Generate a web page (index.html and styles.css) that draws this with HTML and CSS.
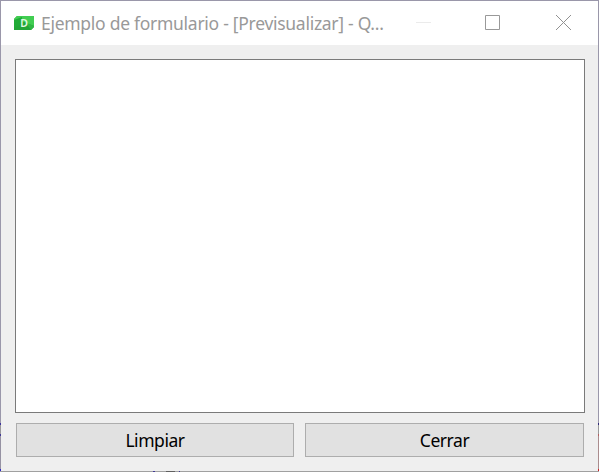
FILE: index.html
```html
<!DOCTYPE html>
<html lang="es">
<head>
<meta charset="utf-8">
<title>Ejemplo de formulario</title>
<link rel="stylesheet" href="styles.css">
</head>
<body>
<div class="window">
  <header class="titlebar">
    <svg class="app-icon" width="20" height="14" viewBox="0 0 20 14">
      <path d="M3 0H20V11L17 14H0V3Z" fill="#22a536"/>
      <path d="M3 0H20V10L10 6L0 4V3Z" fill="#41cd52"/>
      <path d="M0 4L8 1V8L0 12Z" fill="#21ab36"/>
      <path d="M12 7L20 10V11L17 14Z" fill="#2fb744"/>
      <text class="app-letter" x="10" y="11" text-anchor="middle">D</text>
    </svg>
    <span class="title">Ejemplo de formulario - [Previsualizar] - Q...</span>
    <div class="controls">
      <svg width="15" height="15" viewBox="0 0 15 15"><path d="M0 7.5H15" stroke="#ebebeb"/></svg>
      <svg width="15" height="15" viewBox="0 0 15 15"><path d="M.5 .5H14.5V14.5H.5Z" fill="none" stroke="#999"/></svg>
      <svg width="15" height="15" viewBox="0 0 15 15"><path d="M0 0L15 15M15 0L0 15" stroke="#919191"/></svg>
    </div>
  </header>
  <main class="form">
    <div class="text-area"></div>
    <div class="buttons">
      <button class="button">Limpiar</button>
      <button class="button">Cerrar</button>
    </div>
  </main>
</div>
<i class="edge edge-left"></i>
<i class="edge edge-right"></i>
<i class="edge edge-bottom"></i>
</body>
</html>
```
FILE: styles.css
```css
* { box-sizing: border-box; }
body { margin: 0; overflow: hidden; font-family: "Noto Sans", "Open Sans", sans-serif; }
.window {
  width: 599px;
  height: 472px;
  display: flex;
  flex-direction: column;
  border: 1px solid #9a97aa;
  border-bottom-color: #a0a0a0;
  background: #efefef;
}
.titlebar {
  height: 44px;
  display: flex;
  align-items: center;
  padding: 0 27px 0 13px;
  background: #fff;
}
.app-icon { flex: none; margin-top: -1px; }
.app-letter { font: 600 10.5px "Noto Sans", sans-serif; fill: #e2f7e4; }
.title {
  margin-left: 7px;
  font-size: 17.5px;
  line-height: 24px;
  letter-spacing: -0.28px;
  white-space: nowrap;
  color: #999;
}
.controls { display: flex; gap: 56px; margin-left: auto; margin-top: -1px; }
.controls svg { display: block; }
.controls svg:first-child { margin-right: -2px; }
.form {
  flex: 1;
  display: flex;
  flex-direction: column;
  gap: 10px;
  padding: 14px 13px 14px 14px;
}
.text-area { flex: 1; border: 1px solid #7a7a7a; background: #fff; }
.buttons {
  display: grid;
  grid-template-columns: 278px 279px;
  gap: 11px;
  padding-left: 1px;
}
.button {
  height: 34px;
  padding: 0;
  border: 1px solid #adadad;
  background: #e1e1e1;
  color: #000;
  font: 17.5px/24px "Noto Sans", "Open Sans", sans-serif;
  letter-spacing: -0.45px;
}
.edge { position: absolute; width: 1px; height: 48px; top: 423px; }
.edge-left { left: 0; background: linear-gradient(#3c329b 0 2px, #99979b 2px 11px, #403894 11px 13px, #9692a3 13px 46px, #3028c8 46px); }
.edge-right { right: 0; background: linear-gradient(#302878 0 2px, #999 2px 11px, #b06060 11px 13px, #aa8c8e 13px 46px, #d02020 46px); }
.edge-bottom { top: 471px; left: 153px; width: 27px; height: 1px; background: linear-gradient(90deg, #403894 0 2px, #a0a0a0 2px 13px, #606060 13px 22px, #a0a0a0 22px 26px, #403894 26px); }
```
